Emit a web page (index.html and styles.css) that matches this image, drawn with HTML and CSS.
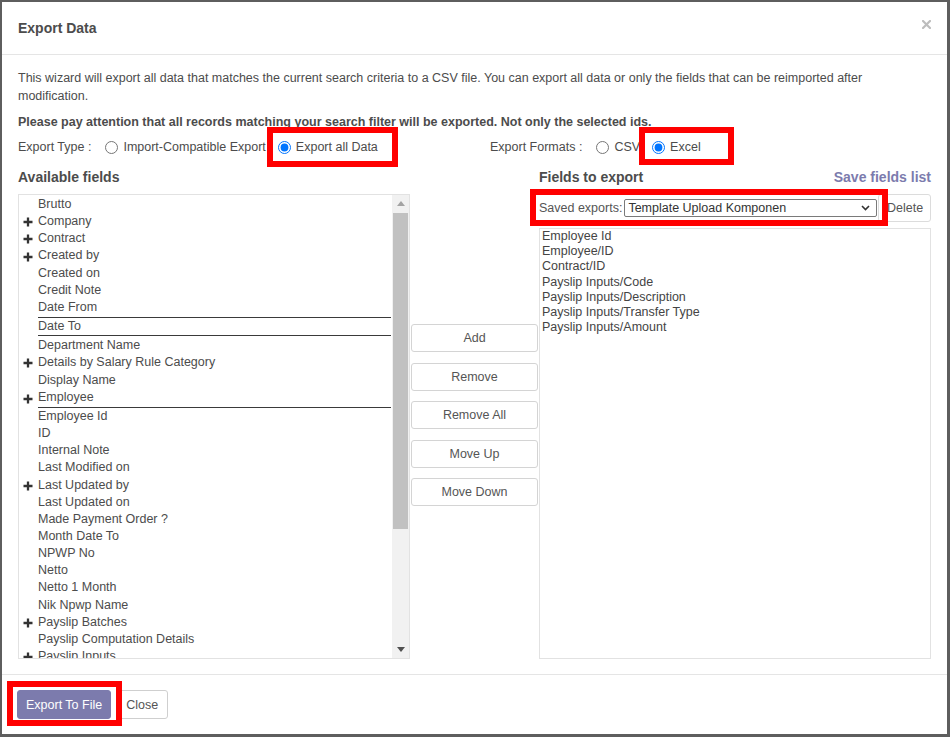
FILE: index.html
```html
<!DOCTYPE html>
<html>
<head>
<meta charset="utf-8">
<title>Export Data</title>
<link rel="stylesheet" href="styles.css">
</head>
<body>
<div class="modal">
  <header class="modal-header">
    <h4 class="modal-title">Export Data</h4>
    <button class="close" aria-label="Close">
      <svg width="9" height="9" viewBox="0 0 9 9"><path d="M1 1L8 8M8 1L1 8" stroke="#bdbdbd" stroke-width="2.2" stroke-linecap="square"/></svg>
    </button>
  </header>

  <main class="modal-body">
    <p class="intro">This wizard will export all data that matches the current search criteria to a CSV file. You can export all data or only the fields that can be reimported after<br>modification.</p>
    <p class="notice">Please pay attention that all records matching your search filter will be exported. Not only the selected ids.</p>

    <div class="export-options">
      <div class="opt-group opt-type">
        <span class="opt-label">Export Type :</span>
        <label class="radio"><input type="radio" name="export-type">Import-Compatible Export</label>
        <label class="radio"><input type="radio" name="export-type" checked>Export all Data</label>
      </div>
      <div class="opt-group opt-format">
        <span class="opt-label">Export Formats :</span>
        <label class="radio"><input type="radio" name="export-format">CSV</label>
        <label class="radio"><input type="radio" name="export-format" checked>Excel</label>
      </div>
    </div>

    <div class="fields-head">
      <h5>Available fields</h5>
      <div></div>
      <div class="right-head">
        <h5>Fields to export</h5>
        <a class="save-link">Save fields list</a>
      </div>
    </div>

    <div class="fields">
      <div class="field-tree">
        <ul class="tree-items">
          <li><span class="slot"></span><span class="name">Brutto</span></li>
          <li><span class="slot"><svg class="plus" viewBox="0 0 10 10"><path d="M5 0.5V9.5M0.5 5H9.5"/></svg></span><span class="name">Company</span></li>
          <li><span class="slot"><svg class="plus" viewBox="0 0 10 10"><path d="M5 0.5V9.5M0.5 5H9.5"/></svg></span><span class="name">Contract</span></li>
          <li><span class="slot"><svg class="plus" viewBox="0 0 10 10"><path d="M5 0.5V9.5M0.5 5H9.5"/></svg></span><span class="name">Created by</span></li>
          <li><span class="slot"></span><span class="name">Created on</span></li>
          <li><span class="slot"></span><span class="name">Credit Note</span></li>
          <li><span class="slot"></span><span class="name">Date From</span></li>
          <li class="boxed"><span class="slot"></span><span class="name">Date To</span></li>
          <li><span class="slot"></span><span class="name">Department Name</span></li>
          <li><span class="slot"><svg class="plus" viewBox="0 0 10 10"><path d="M5 0.5V9.5M0.5 5H9.5"/></svg></span><span class="name">Details by Salary Rule Category</span></li>
          <li><span class="slot"></span><span class="name">Display Name</span></li>
          <li class="underlined"><span class="slot"><svg class="plus" viewBox="0 0 10 10"><path d="M5 0.5V9.5M0.5 5H9.5"/></svg></span><span class="name">Employee</span></li>
          <li><span class="slot"></span><span class="name">Employee Id</span></li>
          <li><span class="slot"></span><span class="name">ID</span></li>
          <li><span class="slot"></span><span class="name">Internal Note</span></li>
          <li><span class="slot"></span><span class="name">Last Modified on</span></li>
          <li><span class="slot"><svg class="plus" viewBox="0 0 10 10"><path d="M5 0.5V9.5M0.5 5H9.5"/></svg></span><span class="name">Last Updated by</span></li>
          <li><span class="slot"></span><span class="name">Last Updated on</span></li>
          <li><span class="slot"></span><span class="name">Made Payment Order ?</span></li>
          <li><span class="slot"></span><span class="name">Month Date To</span></li>
          <li><span class="slot"></span><span class="name">NPWP No</span></li>
          <li><span class="slot"></span><span class="name">Netto</span></li>
          <li><span class="slot"></span><span class="name">Netto 1 Month</span></li>
          <li><span class="slot"></span><span class="name">Nik Npwp Name</span></li>
          <li><span class="slot"><svg class="plus" viewBox="0 0 10 10"><path d="M5 0.5V9.5M0.5 5H9.5"/></svg></span><span class="name">Payslip Batches</span></li>
          <li><span class="slot"></span><span class="name">Payslip Computation Details</span></li>
          <li><span class="slot"><svg class="plus" viewBox="0 0 10 10"><path d="M5 0.5V9.5M0.5 5H9.5"/></svg></span><span class="name">Payslip Inputs</span></li>
        </ul>
        <div class="scrollbar">
          <div class="sb-btn"><svg width="8" height="5" viewBox="0 0 8 5"><path d="M4 0L8 5H0Z" fill="#a3a3a3"/></svg></div>
          <div class="sb-track"><div class="sb-thumb"></div></div>
          <div class="sb-btn"><svg width="8" height="5" viewBox="0 0 8 5"><path d="M0 0H8L4 5Z" fill="#505050"/></svg></div>
        </div>
      </div>

      <div class="actions">
        <button class="btn-action">Add</button>
        <button class="btn-action">Remove</button>
        <button class="btn-action">Remove All</button>
        <button class="btn-action">Move Up</button>
        <button class="btn-action">Move Down</button>
      </div>

      <div class="export-col">
        <div class="saved-row">
          <span class="saved-label">Saved exports:</span>
          <div class="select">
            <span>Template Upload Komponen</span>
            <svg width="9" height="6" viewBox="0 0 9 6"><path d="M1 1L4.5 4.5L8 1" fill="none" stroke="#333" stroke-width="1.6"/></svg>
          </div>
          <button class="btn-delete">Delete</button>
        </div>
        <ul class="export-list">
          <li>Employee Id</li>
          <li>Employee/ID</li>
          <li>Contract/ID</li>
          <li>Payslip Inputs/Code</li>
          <li>Payslip Inputs/Description</li>
          <li>Payslip Inputs/Transfer Type</li>
          <li>Payslip Inputs/Amount</li>
        </ul>
      </div>
    </div>
  </main>

  <footer class="modal-footer">
    <button class="btn-primary">Export To File</button>
    <button class="btn-secondary">Close</button>
  </footer>
</div>

<div class="annot annot-type"></div>
<div class="annot annot-format"></div>
<div class="annot annot-saved"></div>
<div class="annot annot-export"></div>
</body>
</html>
```

FILE: styles.css
```css
* { box-sizing: border-box; }

html, body {
  margin: 0;
  height: 737px;
  overflow: hidden;
  background: #5e5e5e;
}

body {
  padding: 2px 3px 0 2px;
  font-family: "Liberation Sans", Arial, sans-serif;
  font-size: 12.5px;
  color: #4c4c4c;
}

.modal {
  height: 732px;
  background: #fff;
  display: flex;
  flex-direction: column;
}

/* header */
.modal-header {
  height: 53px;
  flex: none;
  border-bottom: 1px solid #e5e5e5;
  display: flex;
  justify-content: space-between;
  align-items: center;
  padding: 0 16px 0 16px;
}

.modal-title {
  margin: 0;
  font-size: 14px;
  font-weight: bold;
  color: #4c4c4c;
}

.close {
  align-self: flex-start;
  margin-top: 18px;
  padding: 0;
  border: 0;
  background: none;
  width: 9px;
  height: 9px;
  display: flex;
}

/* body */
.modal-body {
  flex: none;
  height: 619px;
  padding: 14px 15px 15px 16px;
  display: flex;
  flex-direction: column;
}

.intro {
  margin: 0;
  line-height: 18px;
}

.notice {
  margin: 8px 0 0;
  line-height: 18px;
  font-weight: bold;
}

.export-options {
  height: 32px;
  display: flex;
  align-items: center;
}

.opt-group {
  display: flex;
  align-items: center;
}

.opt-type { width: 472px; }

.opt-label { margin-right: 14px; }

.radio {
  display: flex;
  align-items: center;
  gap: 5px;
  margin-right: 12px;
}

.radio input {
  margin: 0;
  width: 13px;
  height: 13px;
}

/* headings */
.fields-head {
  height: 28px;
  margin-bottom: 3px;
  display: grid;
  grid-template-columns: 392px 129px 392px;
  align-items: center;
}

.fields-head h5 {
  margin: 0;
  font-size: 14px;
  font-weight: bold;
  color: #4c4c4c;
}

.right-head {
  display: flex;
  justify-content: space-between;
  align-items: center;
}

.save-link {
  font-size: 14px;
  font-weight: bold;
  color: #7c7bad;
}

/* field lists */
.fields {
  height: 465px;
  display: grid;
  grid-template-columns: 392px 129px 392px;
}

.field-tree {
  border: 1px solid #e2e2e2;
  display: flex;
  overflow: hidden;
  height: 465px;
}

.tree-items {
  list-style: none;
  margin: 0;
  padding: 1px 0 0;
  flex: 1;
  overflow: hidden;
}

.tree-items li {
  display: flex;
  align-items: center;
  line-height: 17.15px;
  white-space: nowrap;
}

.slot {
  width: 19px;
  flex: none;
  display: flex;
  align-items: center;
  padding-left: 4px;
}

.plus {
  width: 10px;
  height: 10px;
  margin-top: 1px;
}

.plus path {
  stroke: #333;
  stroke-width: 2.3;
  fill: none;
}

.name {
  flex: 1;
  margin-right: 1px;
}

.tree-items li.boxed { margin: 1px 0; }
.tree-items li.boxed .name {
  border-top: 1px solid #3a3a3a;
  border-bottom: 1px solid #3a3a3a;
}

.tree-items li.underlined .name {
  padding-bottom: 1px;
  border-bottom: 1px solid #3a3a3a;
}

.scrollbar {
  width: 17px;
  flex: none;
  background: #f1f1f1;
  display: flex;
  flex-direction: column;
}

.sb-btn {
  height: 17px;
  flex: none;
  display: flex;
  align-items: center;
  justify-content: center;
}

.sb-track {
  flex: 1;
  padding: 0 1px;
}

.sb-thumb {
  height: 316px;
  margin-top: 1px;
  background: #c1c1c1;
}

/* middle buttons */
.actions {
  padding: 130px 1px 0;
  display: flex;
  flex-direction: column;
  gap: 10.5px;
}

.btn-action {
  height: 28px;
  border: 1px solid #d4d4d4;
  border-radius: 3px;
  background: #fff;
  font-family: inherit;
  font-size: 12.5px;
  color: #555;
  padding: 0;
}

/* right column */
.export-col {
  display: flex;
  flex-direction: column;
}

.saved-row {
  height: 28px;
  margin-bottom: 6px;
  display: flex;
  align-items: center;
}

.saved-label {
  color: #555;
  white-space: nowrap;
  flex: none;
}

.select {
  margin-left: 2px;
  flex: 1;
  min-width: 0;
  height: 18px;
  border: 1px solid #7a7a7a;
  border-radius: 2px;
  display: flex;
  align-items: center;
  justify-content: space-between;
  padding: 0 6px 0 3px;
  color: #333;
  white-space: nowrap;
}

.btn-delete {
  margin-left: 1px;
  flex: none;
  width: 53px;
  height: 28px;
  border: 1px solid #dcdcdc;
  border-radius: 3px;
  background: #fff;
  font-family: inherit;
  font-size: 12.5px;
  color: #555;
  text-align: left;
  padding: 0 0 0 8px;
}

.export-list {
  list-style: none;
  margin: 0;
  padding: 0 0 0 2px;
  flex: 1;
  border: 1px solid #e2e2e2;
}

.export-list li {
  line-height: 15.2px;
  color: #444;
}

/* footer */
.modal-footer {
  height: 60px;
  flex: none;
  border-top: 1px solid #e5e5e5;
  padding: 15px;
  display: flex;
  align-items: center;
  gap: 5px;
}

.btn-primary,
.btn-secondary {
  height: 29px;
  border-radius: 3px;
  font-family: inherit;
  font-size: 12.5px;
}

.btn-primary {
  background: #7c7bad;
  border: 1px solid #7c7bad;
  color: #fff;
  padding: 0 8px;
}

.btn-secondary {
  background: #fff;
  border: 1px solid #cfcfcf;
  color: #555;
  padding: 0 9px;
}

/* red annotation frames over the screenshot */
.annot {
  position: absolute;
  border: 6px solid #ff0000;
  pointer-events: none;
}

.annot-type   { left: 267px; top: 127px; width: 131px; height: 40px; }
.annot-format { left: 639px; top: 127px; width: 95px;  height: 38px; }
.annot-saved  { left: 530px; top: 189px; width: 358px; height: 37px; }
.annot-export { left: 7px;   top: 681px; width: 115px; height: 45px; }
```
